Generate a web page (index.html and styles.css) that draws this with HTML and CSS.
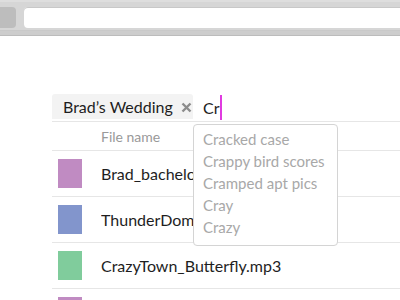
FILE: index.html
```html
<!DOCTYPE html>
<html>
<head>
<meta charset="utf-8">
<link rel="stylesheet" href="styles.css">
</head>
<body>
<div class="chrome">
  <div class="bar">
    <div class="btn"></div>
    <div class="url"></div>
  </div>
  <div class="strip"></div>
</div>
<div class="main">
  <div class="search">
    <div class="tag"><span class="tag-text">Brad’s Wedding</span><svg class="tag-x" width="11" height="11" viewBox="0 0 11 11"><path d="M1.5 1.5 L9.5 9.5 M9.5 1.5 L1.5 9.5" stroke="#8c8c8c" stroke-width="2.4" stroke-linecap="butt" fill="none"/></svg></div>
    <div class="query">Cr<span class="caret"></span></div>
  </div>
  <div class="head"><span class="head-label">File name</span></div>
  <div class="row"><span class="sw purple"></span><span class="name under">Brad_bachelor_party.mov</span></div>
  <div class="row"><span class="sw blue"></span><span class="name under">ThunderDome_highlights.mp4</span></div>
  <div class="row"><span class="sw green"></span><span class="name">CrazyTown_Butterfly.mp3</span></div>
  <div class="row last"><span class="sw purple"></span></div>
  <ul class="menu">
    <li>Cracked case</li>
    <li>Crappy bird scores</li>
    <li>Cramped apt pics</li>
    <li>Cray</li>
    <li>Crazy</li>
  </ul>
</div>
</body>
</html>
```

FILE: styles.css
```css
html, body {
  margin: 0;
  padding: 0;
  background: #fff;
  overflow: hidden;
  width: 400px;
  height: 300px;
}
body {
  font-family: Lato, "Noto Sans", sans-serif;
  color: #222;
}
.chrome {
  background: #d6d6d6;
  border-top: 2px solid #dedede;
}
.bar {
  display: flex;
  align-items: stretch;
  height: 21px;
  padding: 5px 0 2px 0;
  gap: 8px;
}
.btn {
  width: 16px;
  background: #bdbdbd;
  border-radius: 0 4px 4px 0;
}
.url {
  flex: 1;
  background: #fff;
  border-radius: 4px 0 0 4px;
  box-shadow: inset 0 1px 0 #c8c8c8;
}
.strip {
  height: 4px;
  background: #cdcdcd;
  border-top: 1px solid #c9c9c9;
  border-bottom: 1px solid #bcbcbc;
}
.main {
  position: relative;
  margin: 58px 0 0 52px;
}
.search {
  display: flex;
  align-items: center;
  height: 27px;
  border-bottom: 1px solid #e6e6e6;
}
.tag {
  display: flex;
  align-items: center;
  width: 130px;
  height: 25px;
  padding-left: 11px;
  background: #f3f3f3;
  border-radius: 3px 3px 0 0;
  align-self: flex-start;
}
.tag-text {
  font-size: 16px;
  color: #1e1e1e;
}
.tag-x {
  margin-left: 8px;
  margin-top: 1px;
  flex: none;
}
.query {
  display: flex;
  align-items: center;
  margin-left: 10px;
  font-size: 16px;
  color: #1e1e1e;
}
.caret {
  display: inline-block;
  width: 2px;
  height: 25px;
  margin-left: 1px;
  background: #e03be0;
}
.head {
  height: 28px;
  display: flex;
  align-items: center;
  border-bottom: 1px solid #e6e6e6;
}
.head-label {
  margin-left: 49px;
  font-size: 14px;
  color: #999;
}
.row {
  height: 45px;
  display: flex;
  align-items: center;
  border-bottom: 1px solid #e6e6e6;
}
.row.last {
  align-items: flex-start;
  padding-top: 8px;
  box-sizing: border-box;
}
.sw {
  width: 24px;
  height: 29px;
  margin-left: 6px;
  margin-right: 19px;
  flex: none;
}
.purple { background: #c08bc2; }
.blue { background: #8295cc; }
.green { background: #80cc9c; }
.name {
  font-size: 16px;
  color: #1e1e1e;
  white-space: nowrap;
}
.name.under {
  width: 92px;
  overflow: hidden;
}
.menu {
  position: absolute;
  left: 141px;
  top: 30px;
  width: 145px;
  height: 122px;
  margin: 0;
  padding: 3px 0 0 0;
  box-sizing: border-box;
  list-style: none;
  background: #fff;
  border: 1px solid #d4d4d4;
  border-radius: 4px;
}
.menu li {
  padding-left: 9px;
  height: 22px;
  line-height: 22px;
  font-size: 15px;
  color: #a8a8a8;
  white-space: nowrap;
}
```
